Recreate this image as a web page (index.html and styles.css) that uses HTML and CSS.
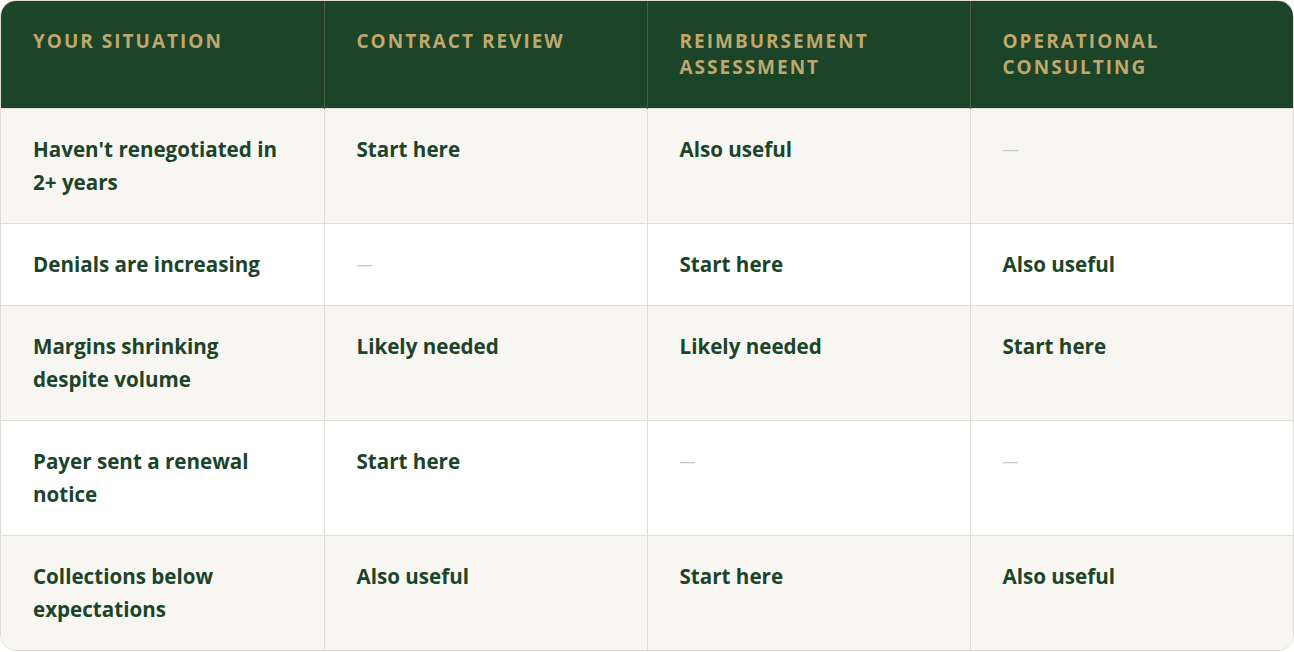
FILE: index.html
```html
<!DOCTYPE html>
<html lang="en">
<head>
<meta charset="utf-8">
<title>Service comparison</title>
<link rel="stylesheet" href="styles.css">
</head>
<body>
<div class="wrap">
  <table class="grid">
    <thead>
      <tr>
        <th>Your situation</th>
        <th>Contract review</th>
        <th>Reimbursement assessment</th>
        <th>Operational consulting</th>
      </tr>
    </thead>
    <tbody>
      <tr>
        <td>Haven't renegotiated in 2+ years</td>
        <td>Start here</td>
        <td>Also useful</td>
        <td class="none">—</td>
      </tr>
      <tr>
        <td>Denials are increasing</td>
        <td class="none">—</td>
        <td>Start here</td>
        <td>Also useful</td>
      </tr>
      <tr>
        <td>Margins shrinking despite volume</td>
        <td>Likely needed</td>
        <td>Likely needed</td>
        <td>Start here</td>
      </tr>
      <tr>
        <td>Payer sent a renewal notice</td>
        <td>Start here</td>
        <td class="none">—</td>
        <td class="none">—</td>
      </tr>
      <tr>
        <td>Collections below expectations</td>
        <td>Also useful</td>
        <td>Start here</td>
        <td>Also useful</td>
      </tr>
    </tbody>
  </table>
</div>
</body>
</html>
```

FILE: styles.css
```css
* { box-sizing: border-box; }
html, body { margin: 0; padding: 0; background: #ffffff; }
.wrap {
  margin: 0;
  border: 1px solid #dedbd4;
  border-radius: 16px;
  overflow: hidden;
  width: 1294px;
}
.grid {
  width: 100%;
  border-collapse: collapse;
  table-layout: fixed;
  font-family: "Open Sans", "Lato", sans-serif;
  font-weight: 700;
}
.grid th {
  background: #1c4429;
  color: #bfa86d;
  text-transform: uppercase;
  text-align: left;
  vertical-align: top;
  font-size: 19px;
  letter-spacing: 2px;
  line-height: 26px;
  padding: 27px 32px 28px 32px;
  height: 107px;
}
.grid th + th { border-left: 1px solid #4e5f3f; }
.grid td {
  color: #1c4429;
  font-size: 20.6px;
  line-height: 33px;
  padding: 24px 32px;
  vertical-align: top;
  border-top: 1px solid #e0ddd6;
}
.grid td + td { border-left: 1px solid #e0ddd6; }
.grid tbody tr:nth-child(odd) td { background: #f7f6f2; }
.grid tbody tr:nth-child(even) td { background: #ffffff; }
.grid td.none { color: #c8c8c6; font-weight: 400; font-size: 16px; }
```
